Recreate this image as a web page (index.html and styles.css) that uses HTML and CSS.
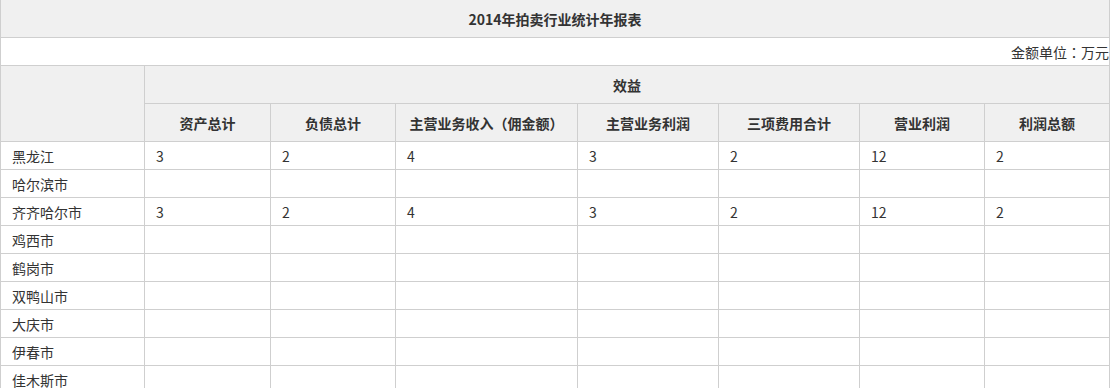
FILE: index.html
```html
<!DOCTYPE html>
<html lang="zh-CN">
<head>
<meta charset="utf-8">
<title>2014年拍卖行业统计年报表</title>
<link rel="stylesheet" href="styles.css">
</head>
<body>
<table class="report">
  <colgroup>
    <col class="c-name">
    <col class="c1">
    <col class="c2">
    <col class="c3">
    <col class="c4">
    <col class="c5">
    <col class="c6">
    <col class="c7">
  </colgroup>
  <thead>
    <tr class="title-row"><th colspan="8" class="title">2014年拍卖行业统计年报表</th></tr>
    <tr class="unit-row"><td colspan="8" class="unit">金额单位<span class="punct" lang="zh-TW">：</span>万元</td></tr>
    <tr class="head-row">
      <th rowspan="2" class="corner"></th>
      <th colspan="7">效益</th>
    </tr>
    <tr class="head-row">
      <th>资产总计</th>
      <th>负债总计</th>
      <th>主营业务收入<span class="punct" lang="zh-TW">（</span>佣金额<span class="punct" lang="zh-TW">）</span></th>
      <th>主营业务利润</th>
      <th>三项费用合计</th>
      <th>营业利润</th>
      <th>利润总额</th>
    </tr>
  </thead>
  <tbody>
    <tr><td>黑龙江</td><td>3</td><td>2</td><td>4</td><td>3</td><td>2</td><td>12</td><td>2</td></tr>
    <tr><td>哈尔滨市</td><td></td><td></td><td></td><td></td><td></td><td></td><td></td></tr>
    <tr><td>齐齐哈尔市</td><td>3</td><td>2</td><td>4</td><td>3</td><td>2</td><td>12</td><td>2</td></tr>
    <tr><td>鸡西市</td><td></td><td></td><td></td><td></td><td></td><td></td><td></td></tr>
    <tr><td>鹤岗市</td><td></td><td></td><td></td><td></td><td></td><td></td><td></td></tr>
    <tr><td>双鸭山市</td><td></td><td></td><td></td><td></td><td></td><td></td><td></td></tr>
    <tr><td>大庆市</td><td></td><td></td><td></td><td></td><td></td><td></td><td></td></tr>
    <tr><td>伊春市</td><td></td><td></td><td></td><td></td><td></td><td></td><td></td></tr>
    <tr><td>佳木斯市</td><td></td><td></td><td></td><td></td><td></td><td></td><td></td></tr>
    <tr><td>七台河市</td><td></td><td></td><td></td><td></td><td></td><td></td><td></td></tr>
  </tbody>
</table>
</body>
</html>
```

FILE: styles.css
```css
html, body {
  margin: 0;
  padding: 0;
  background: #fff;
  overflow: hidden;
}

body {
  font-family: "Noto Sans CJK SC", "Noto Sans", sans-serif;
  font-size: 14px;
  color: #333;
}

.punct {
  font-family: "Noto Sans CJK TC", "Noto Sans CJK SC", sans-serif;
}

.report {
  border-collapse: collapse;
  table-layout: fixed;
  width: 1110px;
}

.c-name { width: 144px; }
.c1 { width: 126px; }
.c2 { width: 125px; }
.c3 { width: 182px; }
.c4 { width: 141px; }
.c5 { width: 141px; }
.c6 { width: 125px; }
.c7 { width: 125px; }

.report th,
.report td {
  border: 1px solid #cfcfcf;
  padding: 0 0 0 11px;
  text-align: left;
  font-weight: normal;
  height: 27px;
  line-height: 16px;
  white-space: nowrap;
  overflow: hidden;
}

.report th {
  background: #f0f0f0;
  font-weight: bold;
  text-align: center;
  padding: 0;
}

.title-row .title {
  border-top: none;
  height: 37px;
}

.unit-row .unit {
  text-align: right;
  padding: 1px 0 0;
  height: 26px;
}

.head-row th {
  height: 37px;
}
```
